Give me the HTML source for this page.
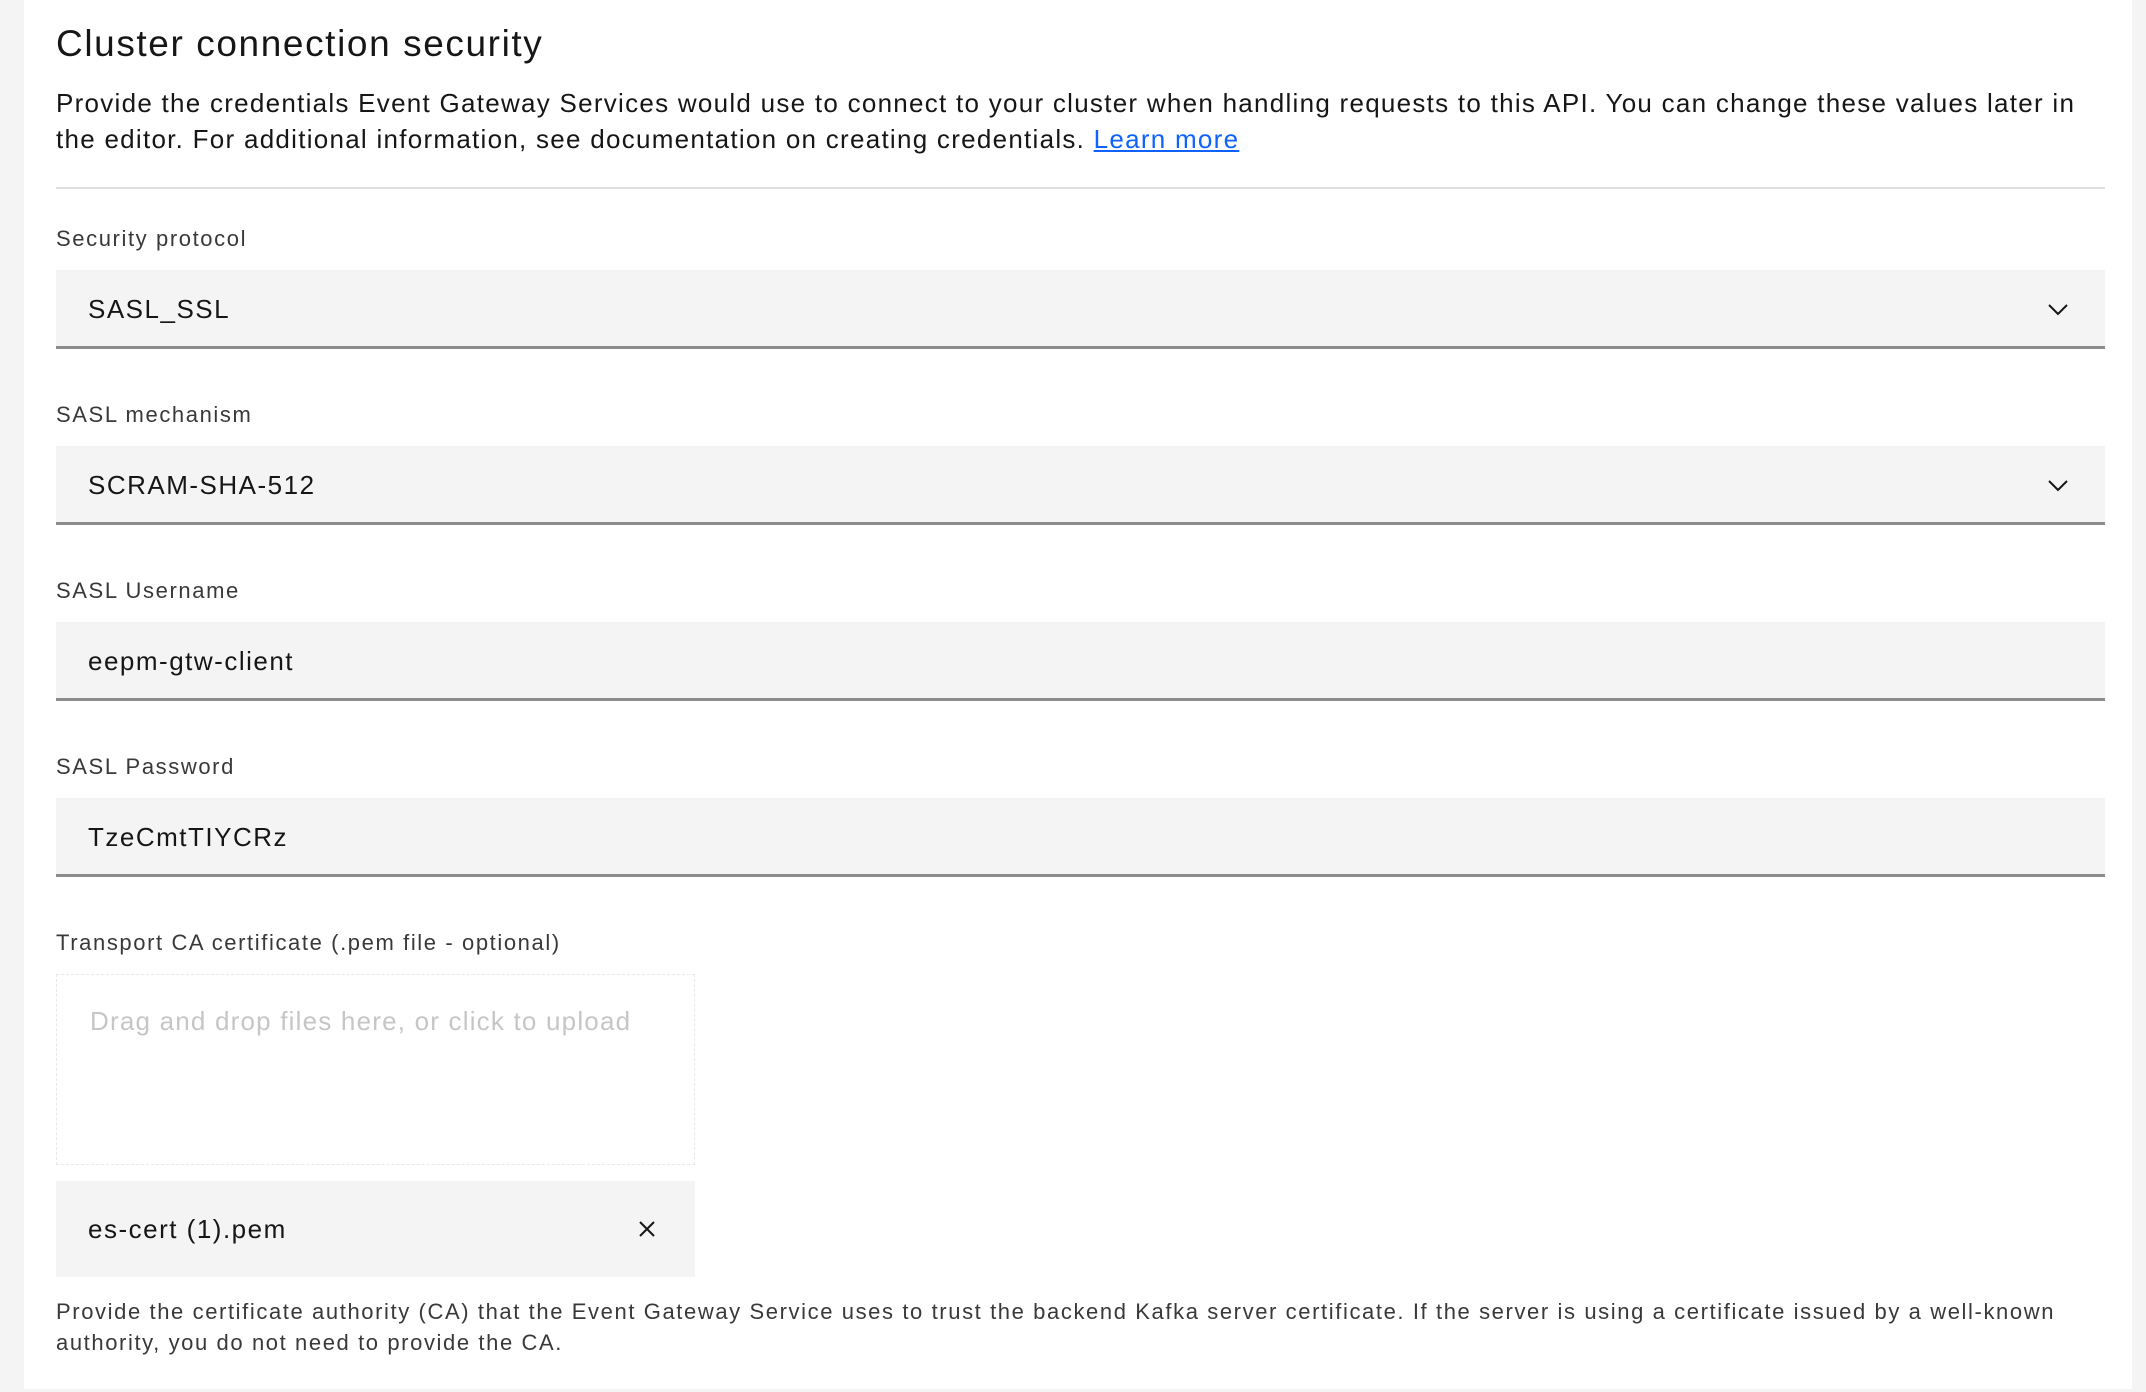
<!DOCTYPE html>
<html><head><meta charset="utf-8"><style>
*{margin:0;padding:0;box-sizing:border-box}
html,body{width:2146px;height:1392px;overflow:hidden;background:#f4f4f4;font-family:"Liberation Sans",sans-serif;color:#161616}
.card{position:absolute;left:24px;top:0;width:2108px;height:1389px;background:#fff}
.a{position:absolute;white-space:nowrap}
.title{left:56px;top:21px;font-size:37px;line-height:46px;letter-spacing:1.6px}
.body{left:56px;top:85px;font-size:26px;line-height:36px;letter-spacing:1.27px}
.body a{color:#0f62fe;text-decoration:underline}
.hr{position:absolute;left:56px;width:2049px;top:187px;height:2px;background:#e0e0e0}
.lbl{left:56px;font-size:22px;color:#393939;line-height:28px;letter-spacing:1.6px}
.fld{position:absolute;left:56px;width:2049px;height:79px;background:#f4f4f4;border-bottom:3px solid #8d8d8d}
.fld span{position:absolute;left:32px;top:23px;font-size:26px;line-height:32px;letter-spacing:1.5px}
.chev{position:absolute;right:36px;top:28px}
.drop{position:absolute;left:56px;top:974px;width:639px;height:191px;border:1.5px dashed #e8e8e8}
.drop span{position:absolute;left:33px;top:31px;font-size:26px;color:#c6c6c6;letter-spacing:1.2px;white-space:nowrap}
.file{position:absolute;left:56px;top:1181px;width:639px;height:96px;background:#f4f4f4}
.file span{position:absolute;left:32px;top:33px;font-size:26px;letter-spacing:1.5px}
.help{left:56px;top:1296px;font-size:22px;line-height:31px;color:#393939;letter-spacing:1.6px}
</style></head><body>
<div class="card">
</div>
<div class="a title">Cluster connection security</div>
<div class="a body">Provide the credentials Event Gateway Services would use to connect to your cluster when handling requests to this API. You can change these values later in<br>the editor. For additional information, see documentation on creating credentials. <a>Learn more</a></div>
<div class="hr"></div>

<div class="a lbl" style="top:225px">Security protocol</div>
<div class="fld" style="top:270px"><span>SASL_SSL</span><svg class="chev" width="22" height="22" viewBox="0 0 22 22"><path d="M2 7 L11 16 L20 7" fill="none" stroke="#161616" stroke-width="2"/></svg></div>

<div class="a lbl" style="top:401px">SASL mechanism</div>
<div class="fld" style="top:446px"><span>SCRAM-SHA-512</span><svg class="chev" width="22" height="22" viewBox="0 0 22 22"><path d="M2 7 L11 16 L20 7" fill="none" stroke="#161616" stroke-width="2"/></svg></div>

<div class="a lbl" style="top:577px">SASL Username</div>
<div class="fld" style="top:622px"><span>eepm-gtw-client</span></div>

<div class="a lbl" style="top:753px">SASL Password</div>
<div class="fld" style="top:798px"><span>TzeCmtTIYCRz</span></div>

<div class="a lbl" style="top:929px">Transport CA certificate (.pem file - optional)</div>
<div class="drop"><span>Drag and drop files here, or click to upload</span></div>
<div class="file"><span>es-cert (1).pem</span><svg style="position:absolute;left:582px;top:39px" width="18" height="18" viewBox="0 0 18 18"><path d="M2 2 L16 16 M16 2 L2 16" stroke="#161616" stroke-width="2"/></svg></div>
<div class="a help">Provide the certificate authority (CA) that the Event Gateway Service uses to trust the backend Kafka server certificate. If the server is using a certificate issued by a well-known<br>authority, you do not need to provide the CA.</div>
</body></html>
